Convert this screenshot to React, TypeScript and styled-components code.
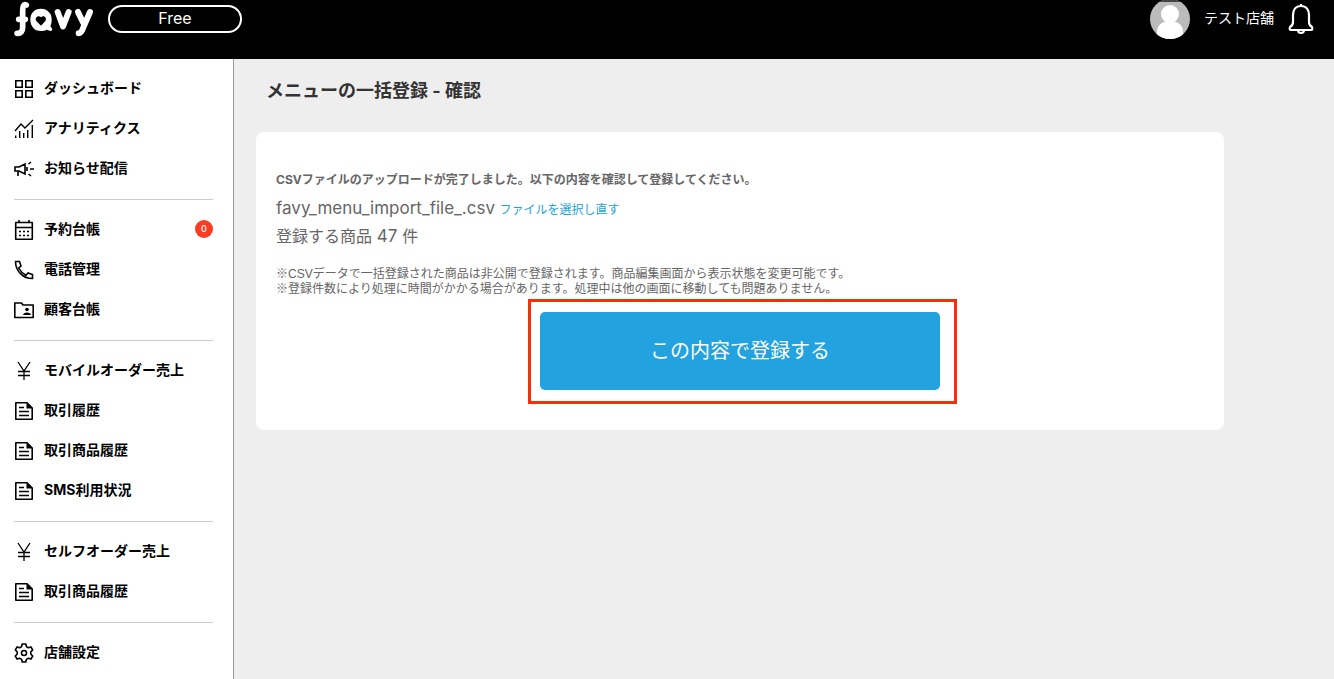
import React from 'react';
import styled, { createGlobalStyle } from 'styled-components';

const Global = createGlobalStyle`
  *, *::before, *::after { box-sizing: border-box; }
  body {
    margin: 0;
    background: #eee;
    color: #666;
    font-family: Inter, "Noto Sans CJK JP", sans-serif;
  }
`;

const Page = styled.div`
  display: flex;
  flex-direction: column;
  min-height: 100vh;
`;

const Header = styled.header`
  display: flex;
  justify-content: space-between;
  align-items: flex-start;
  height: 59px;
  padding: 0 20px 0 14px;
  background: #000;
  color: #fff;
`;

const HeaderSide = styled.div`
  display: flex;
  align-items: center;
  height: 38px;
  gap: 14px;
`;

const LogoLink = styled.a`
  display: flex;
`;

const Plan = styled.button`
  width: 134px;
  height: 28px;
  padding: 0 0 2px;
  border: 2px solid #fff;
  border-radius: 14px;
  background: transparent;
  color: #fff;
  font: 400 16px/22px Inter, sans-serif;
`;

const StoreName = styled.span`
  padding-bottom: 2px;
  font-size: 14px;
  line-height: 20px;
`;

const BellButton = styled.button`
  display: flex;
  padding: 0;
  border: 0;
  background: transparent;
  color: #fff;
`;

const Body = styled.div`
  display: flex;
  flex: 1;
`;

const Sidebar = styled.nav`
  flex: 0 0 234px;
  padding: 0 20px 0 14px;
  border-right: 1px solid #999;
  background: #fff;
`;

const Group = styled.ul`
  margin: 0;
  padding: 10px 0;
  list-style: none;
  & + & { border-top: 1px solid #ccc; }
`;

const NavLink = styled.a`
  display: flex;
  align-items: center;
  gap: 10px;
  height: 40px;
  color: #000;
  font-size: 14px;
  font-weight: 700;
  line-height: 20px;
  text-decoration: none;
  svg { flex: none; }
`;

const NavLabel = styled.span`
  flex: 1;
  padding-bottom: 2px;
`;

const Badge = styled.span`
  width: 18px;
  height: 18px;
  margin-bottom: 2px;
  border-radius: 50%;
  background: #fa3c23;
  color: #fff;
  font-size: 9px;
  font-weight: 500;
  line-height: 18px;
  text-align: center;
`;

const Main = styled.main`
  flex: 1;
  min-width: 0;
  padding: 0 110px 0 22px;
`;

const Title = styled.h1`
  margin: 0;
  padding: 18px 10px 27px;
  color: #333;
  font-size: 18px;
  font-weight: 700;
  line-height: 28px;
`;

const Card = styled.section`
  display: flex;
  flex-direction: column;
  padding: 39px 20px 40px;
  border-radius: 8px;
  background: #fff;
`;

const Lead = styled.p`
  margin: 0 0 5px;
  font-size: 12px;
  font-weight: 700;
  line-height: 18px;
`;

const Line = styled.p`
  margin: 0;
  font-size: 16px;
  line-height: 28px;
`;

const Value = styled.span`
  font-size: 17px;
  line-height: 20px;
`;

const Reselect = styled.a`
  color: #22a2df;
  font-size: 12px;
  line-height: 20px;
  text-decoration: none;
`;

const Notes = styled.p`
  margin: 17px 0 15px;
  font-family: "Liberation Sans", "Noto Sans CJK JP", sans-serif;
  font-size: 12px;
  line-height: 15px;
`;

const Highlight = styled.div`
  position: relative;
  align-self: center;
  &::after {
    content: "";
    position: absolute;
    inset: -13px -17px -14px -12px;
    border: 3px solid #fa2d0a;
    pointer-events: none;
  }
`;

const Submit = styled.button`
  display: block;
  width: 400px;
  height: 78px;
  border: 0;
  border-radius: 5px;
  background: #22a2df;
  color: #fff;
  font-family: inherit;
  font-size: 20px;
  line-height: 30px;
`;

const Logo = () => (
  <svg width="80" height="38" viewBox="0 0 240 114" fill="none" stroke="#fff" strokeWidth="18" strokeLinecap="round" strokeLinejoin="round" role="img" aria-label="favy">
    <path strokeWidth="17" d="M37 15C28 11 26 20 26 34V82C26 94 20 101 9 100M14 58H34" />
    <path fill="#fff" stroke="none" fillRule="evenodd" d="M80 26C93 26 101 31 105 37C111 42 113 50 113 60C113 69 111 75 109 79L115 87Q115 93 109 93L98 89C93 92 86 93 80 93C61 93 49 78 49 59C49 40 61 26 80 26ZM81 77L94 63C100 54 90 43 81 52C72 43 61 54 67 63Z" />
    <path d="M131 36L147 79L164 36" />
    <path d="M192 36L208 69M228 36L208 82C204 94 200 100 194 100" />
  </svg>
);

const Avatar = () => (
  <svg width="40" height="40" viewBox="0 0 40 40" aria-hidden="true">
    <defs><clipPath id="face"><circle cx="20" cy="20" r="20" /></clipPath></defs>
    <g clipPath="url(#face)">
      <path fill="#bbb" d="M0 0h40v40H0z" />
      <path fill="#444" d="M0 0h40v3H0z" />
      <circle cx="20" cy="15" r="9" fill="#fff" />
      <path fill="#fff" d="M7 40V33C7 26 12 22 20 22S33 26 33 33V40Z" />
    </g>
  </svg>
);

const Bell = () => (
  <svg width="26" height="32" viewBox="0 0 26 32" fill="none" stroke="currentColor" strokeWidth="2.200" strokeLinejoin="round" aria-hidden="true">
    <path d="M13 3C7.500 3 5 7 5 12V19C5 22 4 23 2 24Q1 27 3 27H23Q25 27 24 24C22 23 21 22 21 19V12C21 7 18.500 3 13 3ZM13 3V1M10 27C10 31 16 31 16 27" />
  </svg>
);

type IconName = 'grid' | 'chart' | 'horn' | 'calendar' | 'phone' | 'folder' | 'yen' | 'doc' | 'gear';

const drawings: Record<IconName, React.ReactNode> = {
  grid: <path d="M1.800 1.800h6.400v6.400H1.800zM11.800 1.800h6.400v6.400h-6.400zM1.800 11.800h6.400v6.400H1.800zM11.800 11.800h6.400v6.400h-6.400z" />,
  chart: <path strokeWidth="1.400" d="M1 12L7 5L11 9L19 1M1.700 16.500V19M5.700 12V19M9.700 14V19M13.700 11V19M18.300 6V19" />,
  horn: <path d="M1 8H5L11 5V15L5 12H1ZM4 12V17M13 8V12M14.500 5L17 3M16 10H20M14.500 15L17 17" />,
  calendar: (
    <>
      <path strokeLinejoin="round" d="M1.700 2.500H18.300V19.200H1.700ZM1.700 7.500H18.300M5 0V3M15 0V3" />
      <path d="M5 11.500H15M5 15.500H15" strokeDasharray="2 2" />
    </>
  ),
  phone: <path d="M1.500 1.500H5.500L7 6L4.700 8C6.500 11.500 8.500 13.500 12 15.300L14 13L18.500 14.500V18.500C9 18.500 1.500 11 1.500 1.500Z" />,
  folder: (
    <>
      <path strokeLinejoin="round" d="M.8 3H7.500L9 5H19.200V17.500H.8Z" />
      <circle cx="13" cy="9.500" r="1.800" fill="currentColor" stroke="none" />
      <path d="M9 15C9 11.500 17 11.500 17 15Z" fill="currentColor" stroke="none" />
    </>
  ),
  yen: <path d="M4 1L10 10L16 1M10 10V19M4 10.500H16M4 14.500H16" strokeWidth="1.300" />,
  doc: (
    <>
      <path strokeLinejoin="round" d="M1.800 1.800H13L18.200 7V18.200H1.800ZM5 6.500H10M5 10.500H15M5 14.500H15" />
      <path d="M12.500 1L19 7.500H12.500Z" fill="currentColor" stroke="none" />
    </>
  ),
  gear: (
    <>
      <path strokeLinejoin="round" d="M8.200 1H11.800L12.400 3.600L14.300 4.700L16.900 3.900L18.700 7L16.800 8.900V11.100L18.700 13L16.900 16.100L14.300 15.300L12.400 16.400L11.800 19H8.200L7.600 16.400L5.700 15.300L3.100 16.100L1.300 13L3.200 11.100V8.900L1.300 7L3.100 3.900L5.700 4.700L7.600 3.600Z" />
      <circle cx="10" cy="10" r="2.500" />
    </>
  ),
};

const Icon = ({ name }: { name: IconName }) => (
  <svg width="20" height="20" viewBox="0 0 20 20" fill="none" stroke="currentColor" strokeWidth="1.600" aria-hidden="true">
    {drawings[name]}
  </svg>
);

type Item = { icon: IconName; label: string; count?: number };

const groups: Item[][] = [
  [
    { icon: 'grid', label: 'ダッシュボード' },
    { icon: 'chart', label: 'アナリティクス' },
    { icon: 'horn', label: 'お知らせ配信' },
  ],
  [
    { icon: 'calendar', label: '予約台帳', count: 0 },
    { icon: 'phone', label: '電話管理' },
    { icon: 'folder', label: '顧客台帳' },
  ],
  [
    { icon: 'yen', label: 'モバイルオーダー売上' },
    { icon: 'doc', label: '取引履歴' },
    { icon: 'doc', label: '取引商品履歴' },
    { icon: 'doc', label: 'SMS利用状況' },
  ],
  [
    { icon: 'yen', label: 'セルフオーダー売上' },
    { icon: 'doc', label: '取引商品履歴' },
  ],
  [{ icon: 'gear', label: '店舗設定' }],
];

export default function App() {
  return (
    <Page lang="ja">
      <Global />
      <Header>
        <HeaderSide>
          <LogoLink href="#"><Logo /></LogoLink>
          <Plan type="button">Free</Plan>
        </HeaderSide>
        <HeaderSide>
          <Avatar />
          <StoreName>テスト店舗</StoreName>
          <BellButton type="button" aria-label="お知らせ"><Bell /></BellButton>
        </HeaderSide>
      </Header>
      <Body>
        <Sidebar>
          {groups.map((items, index) => (
            <Group key={index}>
              {items.map(({ icon, label, count }) => (
                <li key={label}>
                  <NavLink href="#">
                    <Icon name={icon} />
                    <NavLabel>{label}</NavLabel>
                    {count !== undefined && <Badge>{count}</Badge>}
                  </NavLink>
                </li>
              ))}
            </Group>
          ))}
        </Sidebar>
        <Main>
          <Title>メニューの一括登録 - 確認</Title>
          <Card>
            <Lead>CSVファイルのアップロードが完了しました。以下の内容を確認して登録してください。</Lead>
            <Line><Value>favy_menu_import_file_.csv</Value> <Reselect href="#">ファイルを選択し直す</Reselect></Line>
            <Line>登録する商品<Value> 47 </Value>件</Line>
            <Notes>
              ※CSVデータで一括登録された商品は非公開で登録されます。商品編集画面から表示状態を変更可能です。<br />
              ※登録件数により処理に時間がかかる場合があります。処理中は他の画面に移動しても問題ありません。
            </Notes>
            <Highlight><Submit type="button">この内容で登録する</Submit></Highlight>
          </Card>
        </Main>
      </Body>
    </Page>
  );
}
